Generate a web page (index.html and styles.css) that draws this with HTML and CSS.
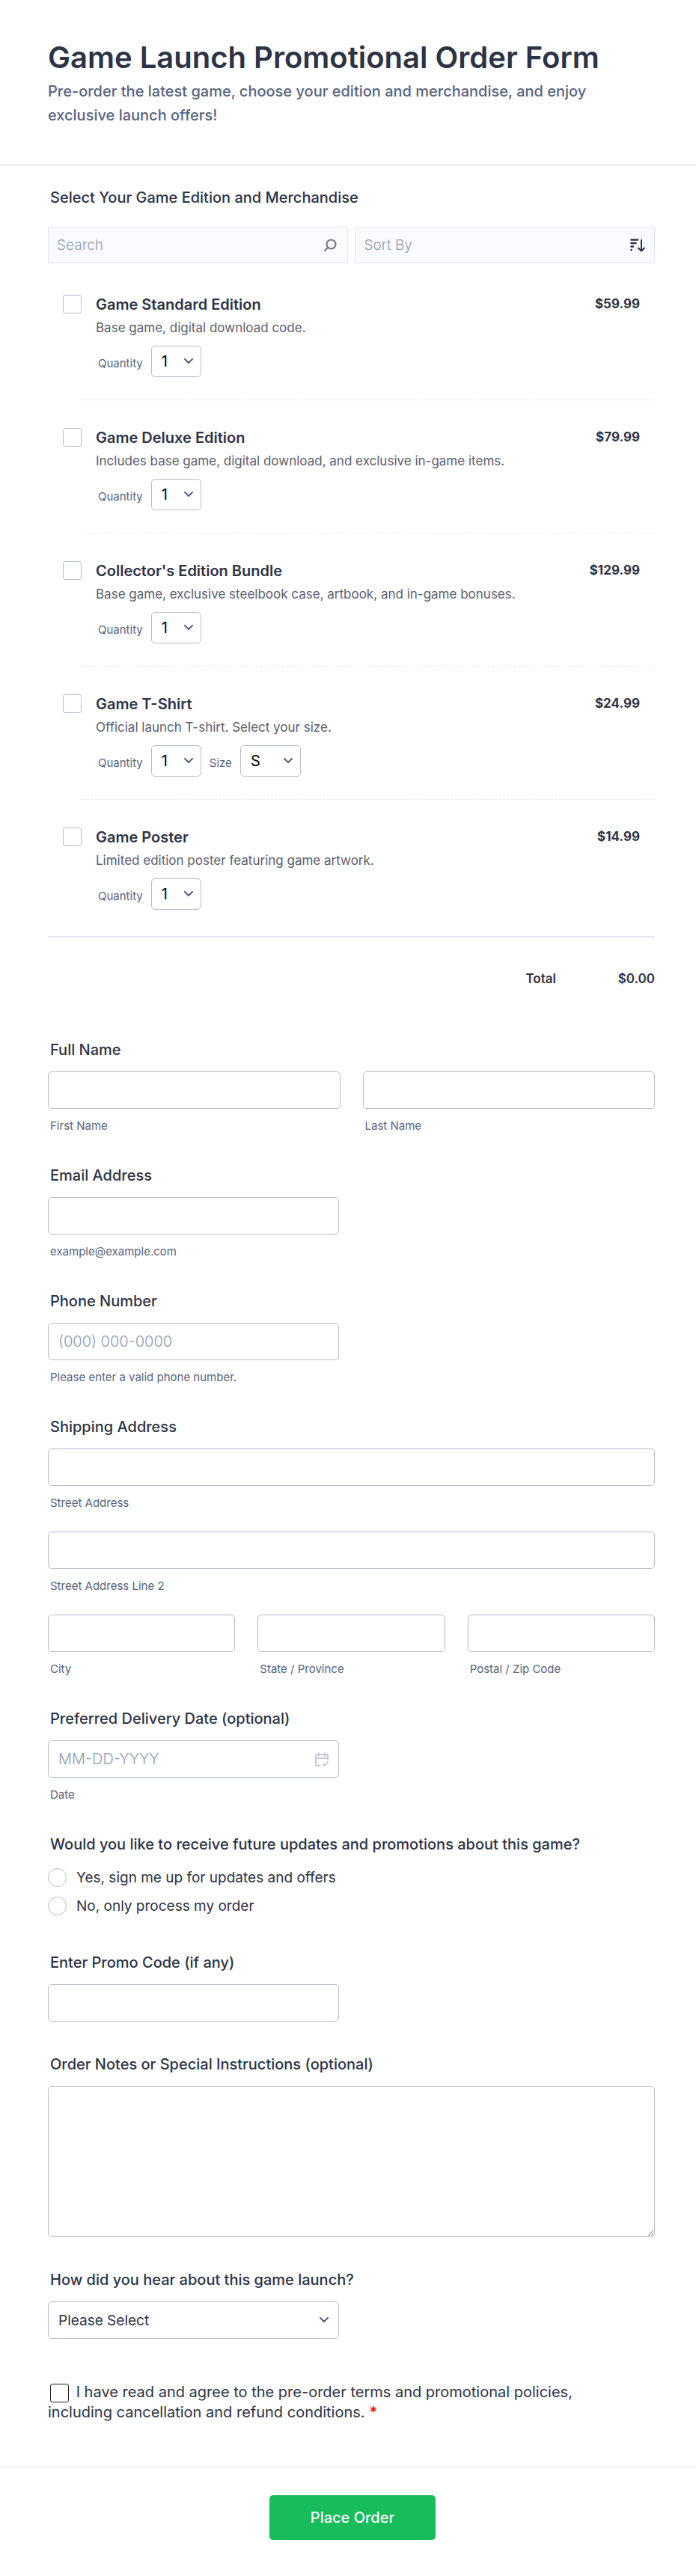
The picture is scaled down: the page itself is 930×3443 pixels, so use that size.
FILE: index.html
```
<!DOCTYPE html>
<html lang="en">
<head>
    <meta charset="UTF-8">
    <meta name="viewport" content="width=device-width, initial-scale=1.0">
    <link rel="stylesheet" href="styles.css">
    <title>Game Launch Promotional Order Form</title>
</head>
<body>
    <form class="order-form">
        <header class="form-header">
            <h1>Game Launch Promotional Order Form</h1>
            <p>Pre-order the latest game, choose your edition and merchandise, and enjoy exclusive launch offers!</p>
        </header>

        <div class="form-body">
            <h2 class="question">Select Your Game Edition and Merchandise</h2>
            <div class="filters">
                <div class="filter">
                    <input type="text" placeholder="Search" aria-label="Search">
                    <svg class="filter-icon" viewBox="0 0 18 18" fill="none" stroke="#6f7285" stroke-width="2" stroke-linecap="round">
                        <circle cx="10.5" cy="7.5" r="6"/>
                        <path d="M6 12L2 16"/>
                    </svg>
                </div>
                <div class="filter">
                    <input type="text" placeholder="Sort By" aria-label="Sort By">
                    <svg class="filter-icon sort-icon" viewBox="0 0 20 18" fill="none" stroke="#2c3345" stroke-width="2" stroke-linecap="round" stroke-linejoin="round">
                        <path d="M1.500 1.500H10M1.500 6H7.500M1.500 10.500H4M1.500 15H1.700" stroke-width="2.500"/>
                        <path d="M15 2V16.500M11 12.500L15 16.500L19 12.500"/>
                    </svg>
                </div>
            </div>

            <ul class="products">
                <li class="product">
                    <input type="checkbox" id="standard">
                    <div class="product-info">
                        <label class="product-name" for="standard">Game Standard Edition</label>
                        <p class="product-text">Base game, digital download code.</p>
                        <div class="options">
                            <label for="qty1">Quantity</label>
                            <select id="qty1"><option>1</option><option>2</option></select>
                        </div>
                    </div>
                    <span class="price">$59.99</span>
                </li>
                <li class="product">
                    <input type="checkbox" id="deluxe">
                    <div class="product-info">
                        <label class="product-name" for="deluxe">Game Deluxe Edition</label>
                        <p class="product-text">Includes base game, digital download, and exclusive in-game items.</p>
                        <div class="options">
                            <label for="qty2">Quantity</label>
                            <select id="qty2"><option>1</option><option>2</option></select>
                        </div>
                    </div>
                    <span class="price">$79.99</span>
                </li>
                <li class="product">
                    <input type="checkbox" id="collector">
                    <div class="product-info">
                        <label class="product-name" for="collector">Collector's Edition Bundle</label>
                        <p class="product-text">Base game, exclusive steelbook case, artbook, and in-game bonuses.</p>
                        <div class="options">
                            <label for="qty3">Quantity</label>
                            <select id="qty3"><option>1</option><option>2</option></select>
                        </div>
                    </div>
                    <span class="price">$129.99</span>
                </li>
                <li class="product">
                    <input type="checkbox" id="tshirt">
                    <div class="product-info">
                        <label class="product-name" for="tshirt">Game T-Shirt</label>
                        <p class="product-text">Official launch T-shirt. Select your size.</p>
                        <div class="options">
                            <label for="qty4">Quantity</label>
                            <select id="qty4"><option>1</option><option>2</option></select>
                            <label for="size">Size</label>
                            <select id="size" class="size"><option>S</option><option>M</option><option>L</option></select>
                        </div>
                    </div>
                    <span class="price">$24.99</span>
                </li>
                <li class="product">
                    <input type="checkbox" id="poster">
                    <div class="product-info">
                        <label class="product-name" for="poster">Game Poster</label>
                        <p class="product-text">Limited edition poster featuring game artwork.</p>
                        <div class="options">
                            <label for="qty5">Quantity</label>
                            <select id="qty5"><option>1</option><option>2</option></select>
                        </div>
                    </div>
                    <span class="price">$14.99</span>
                </li>
            </ul>
            <div class="total">
                <span>Total</span>
                <span class="total-price">$0.00</span>
            </div>

            <fieldset class="field">
                <legend class="question">Full Name</legend>
                <div class="columns">
                    <div class="box">
                        <input type="text" id="first">
                        <label class="hint" for="first">First Name</label>
                    </div>
                    <div class="box">
                        <input type="text" id="last">
                        <label class="hint" for="last">Last Name</label>
                    </div>
                </div>
            </fieldset>

            <div class="field">
                <label class="question" for="email">Email Address</label>
                <div class="box half">
                    <input type="email" id="email">
                    <span class="hint">example@example.com</span>
                </div>
            </div>

            <div class="field">
                <label class="question" for="phone">Phone Number</label>
                <div class="box half">
                    <input type="tel" id="phone" placeholder="(000) 000-0000">
                    <span class="hint">Please enter a valid phone number.</span>
                </div>
            </div>

            <fieldset class="field">
                <legend class="question">Shipping Address</legend>
                <div class="address">
                    <div class="box">
                        <input type="text" id="street">
                        <label class="hint" for="street">Street Address</label>
                    </div>
                    <div class="box">
                        <input type="text" id="street2">
                        <label class="hint" for="street2">Street Address Line 2</label>
                    </div>
                    <div class="columns">
                        <div class="box">
                            <input type="text" id="city">
                            <label class="hint" for="city">City</label>
                        </div>
                        <div class="box">
                            <input type="text" id="state">
                            <label class="hint" for="state">State / Province</label>
                        </div>
                        <div class="box">
                            <input type="text" id="zip">
                            <label class="hint" for="zip">Postal / Zip Code</label>
                        </div>
                    </div>
                </div>
            </fieldset>

            <div class="field">
                <label class="question" for="date">Preferred Delivery Date (optional)</label>
                <div class="box half date">
                    <input type="text" id="date" placeholder="MM-DD-YYYY">
                    <svg class="date-icon" viewBox="0 0 20 20" fill="none" stroke="#c6c8d8" stroke-width="2" stroke-linecap="round" stroke-linejoin="round">
                        <path d="M8 18H4a2 2 0 0 1-2-2V5a2 2 0 0 1 2-2h12a2 2 0 0 1 2 2v5M2 8h16M6 1v4M14 1v4M12 16l2 2l4-5"/>
                    </svg>
                    <span class="hint">Date</span>
                </div>
            </div>

            <fieldset class="field choices">
                <legend class="question">Would you like to receive future updates and promotions about this game?</legend>
                <div class="choice-list">
                    <label class="choice"><input type="radio" name="updates">Yes, sign me up for updates and offers</label>
                    <label class="choice"><input type="radio" name="updates">No, only process my order</label>
                </div>
            </fieldset>

            <div class="field no-hint">
                <label class="question" for="promo">Enter Promo Code (if any)</label>
                <div class="box half">
                    <input type="text" id="promo">
                </div>
            </div>

            <div class="field no-hint">
                <label class="question" for="notes">Order Notes or Special Instructions (optional)</label>
                <div class="box">
                    <textarea id="notes"></textarea>
                </div>
            </div>

            <div class="field no-hint">
                <label class="question" for="source">How did you hear about this game launch?</label>
                <div class="box half">
                    <select id="source"><option>Please Select</option></select>
                </div>
            </div>

            <div class="terms">
                <input type="checkbox" id="terms" required>
                <label for="terms">I have read and agree to the pre-order terms and promotional policies, including cancellation and refund conditions.</label>
                <span class="required">*</span>
            </div>
        </div>

        <footer class="form-footer">
            <button type="submit">Place Order</button>
        </footer>
    </form>
</body>
</html>
```

FILE: styles.css
```
* {
    box-sizing: border-box;
}

body {
    margin: 0;
    background-color: #fff;
    font-family: Inter, sans-serif;
    font-size: 20px;
    line-height: 24px;
    color: #2c3345;
}

input, select, textarea, button {
    font-family: inherit;
    font-size: 20px;
    margin: 0;
}

::placeholder {
    color: #8d9cb0;
    font-weight: 300;
    opacity: 1;
}

.form-header {
    padding: 52px 114px 50px 64px;
    border-bottom: 1px solid #d3d6e0;
}

.form-header h1 {
    margin: 0;
    font-size: 40px;
    line-height: 50px;
    font-weight: 600;
}

.form-header p {
    margin: 4px 0 0;
    line-height: 32px;
    font-weight: 500;
    color: #57647e;
}

.form-body {
    padding: 31px 55px 59px 64px;
}

.question {
    display: block;
    margin: 0;
    padding: 0 3px;
    font-size: 20px;
    line-height: 24px;
    font-weight: 500;
}

/* product list */

.filters {
    display: grid;
    grid-template-columns: 1fr 1fr;
    gap: 10px;
    margin-top: 27px;
}

.filter {
    position: relative;
}

.filter input {
    display: block;
    width: 100%;
    height: 49px;
    padding: 0 40px 0 11px;
    border: 1px solid #e3e5f1;
    background-color: #fafaff;
    border-radius: 0;
    font-size: 19px;
}

.filter-icon {
    position: absolute;
    top: 16px;
    right: 15px;
    width: 18px;
    height: 18px;
}

.sort-icon {
    right: 13px;
    width: 20px;
}

.products {
    list-style-type: none;
    margin: 0;
    padding: 5px 0 4px;
    border-bottom: 2px solid #e3e5f1;
}

.product {
    position: relative;
    display: flex;
    min-height: 178px;
    padding: 37px 20px 0;
}

/* dashed line between two products */
.product:not(:last-child)::after {
    content: "";
    position: absolute;
    left: 43px;
    right: 0;
    bottom: 0;
    border-bottom: 1px dashed #e9eaf4;
}

.product-info {
    flex: 1;
    padding: 0 0 0 19px;
}

.product-name {
    display: block;
    padding-top: 1px;
    font-weight: 600;
}

.product-text {
    margin: 7px 0 0;
    font-size: 17px;
    line-height: 24px;
    color: #5a5e6f;
}

.options {
    display: flex;
    align-items: center;
    gap: 11px;
    margin-top: 12px;
    padding-left: 3px;
    font-size: 15px;
    color: #57647e;
}

.options label {
    padding-top: 6px;
}

.price {
    font-size: 17px;
    font-weight: 700;
}

input[type="checkbox"], input[type="radio"] {
    appearance: none;
    flex: none;
    width: 25px;
    height: 25px;
    border: 1px solid #b8bdc9;
    border-radius: 3px;
    background-color: #fff;
}

input[type="radio"] {
    border-radius: 50%;
}

select {
    appearance: none;
    border: 1px solid #b8bdc9;
    border-radius: 5px;
    background: #fff url("data:image/svg+xml,%3Csvg xmlns='http://www.w3.org/2000/svg' width='12' height='8' fill='none' stroke='%23555f7e' stroke-width='2' stroke-linecap='round' stroke-linejoin='round'%3E%3Cpath d='M1 1l5 5l5-5'/%3E%3C/svg%3E") no-repeat right 10px center;
}

.options select {
    width: 67px;
    height: 42px;
    padding: 0 13px;
    color: #000;
}

.options .size {
    width: 81px;
}

.total {
    display: flex;
    justify-content: flex-end;
    margin-top: 43px;
    font-size: 17px;
    font-weight: 600;
}

.total-price {
    width: 132px;
    text-align: right;
}

/* questions */

.field {
    min-width: 0;
    margin: 44px 0 0;
    padding: 0;
    border: none;
}

.total + .field {
    margin-top: 71px;
}

.no-hint {
    padding-bottom: 1px;
}

.columns {
    display: flex;
    gap: 30px;
}

.box {
    flex: 1;
    margin-top: 17px;
}

.half {
    width: 48%;
}

.box input, .box select {
    display: block;
    width: 100%;
    height: 50px;
    padding: 0 13px;
    border: 1px solid #b8bdc9;
    border-radius: 5px;
    color: #2c3345;
}

.box select {
    font-size: 19px;
    background-position: right 13px center;
}

.hint {
    display: block;
    margin-top: 13px;
    padding: 0 3px;
    font-size: 15px;
    line-height: 20px;
    color: #57647e;
}

.address .box + .box, .address .columns {
    margin-top: 28px;
}

.address .columns .box {
    margin-top: 0;
}

.date {
    position: relative;
}

.date-icon {
    position: absolute;
    top: 16px;
    right: 13px;
    width: 20px;
    height: 20px;
}

.choices {
    padding-bottom: 7px;
}

.choice-list {
    display: flex;
    flex-direction: column;
    gap: 13px;
    margin-top: 20px;
}

.choice {
    display: flex;
    align-items: center;
    gap: 13px;
    font-size: 19px;
    line-height: 25px;
}

textarea {
    display: block;
    width: 100%;
    height: 202px;
    padding: 13px;
    border: 1px solid #b8bdc9;
    border-radius: 5px;
}

.terms {
    margin-top: 57px;
    padding-right: 60px;
    line-height: 27px;
}

.terms input {
    vertical-align: top;
    margin: 2px 4px 0 3px;
    border-color: #2a1a2c;
}

.required {
    color: #f21b12;
    font-weight: 700;
}

.form-footer {
    display: flex;
    justify-content: center;
    padding: 37px 52px 49px 64px;
    border-top: 1px solid #e3e5f1;
}

button {
    min-width: 222px;
    height: 60px;
    padding: 0 16px;
    border: none;
    border-radius: 5px;
    background-color: #18bd5b;
    color: #fff;
    font-weight: 500;
    cursor: pointer;
}
```
